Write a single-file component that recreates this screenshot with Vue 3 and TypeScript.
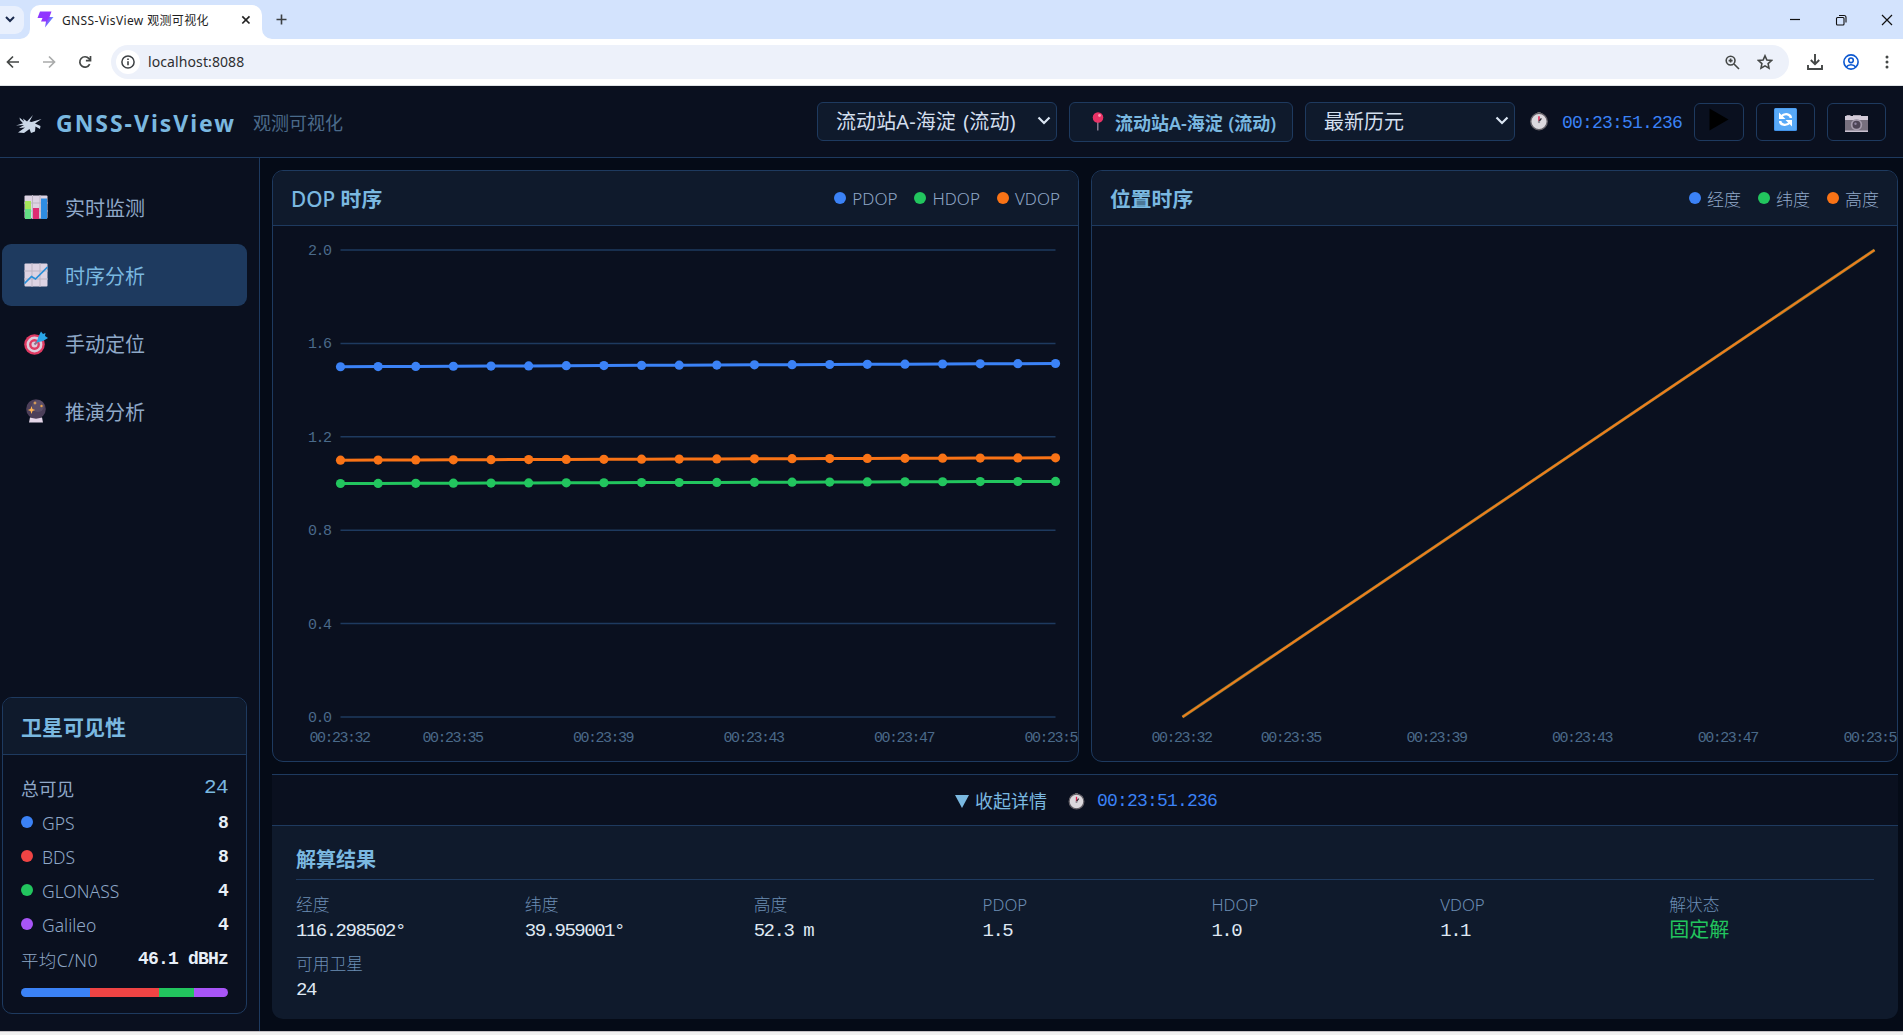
<script setup lang="ts">
interface NavItem { icon: string; label: string; active?: boolean }
interface Sat { name: string; color: string; count: number }
interface Series { name: string; color: string; from: number; to: number }

const nav: NavItem[] = [
  { icon: 'bars', label: '实时监测' },
  { icon: 'trend', label: '时序分析', active: true },
  { icon: 'target', label: '手动定位' },
  { icon: 'orb', label: '推演分析' },
]

const sats: Sat[] = [
  { name: 'GPS', color: '#3b82f6', count: 8 },
  { name: 'BDS', color: '#ef4444', count: 8 },
  { name: 'GLONASS', color: '#22c55e', count: 4 },
  { name: 'Galileo', color: '#a855f7', count: 4 },
]

const dop: Series[] = [
  { name: 'PDOP', color: '#3b82f6', from: 1.5, to: 1.514 },
  { name: 'HDOP', color: '#22c55e', from: 1.0, to: 1.009 },
  { name: 'VDOP', color: '#f97316', from: 1.1, to: 1.11 },
]

const position = [
  { name: '经度', color: '#3b82f6' },
  { name: '纬度', color: '#22c55e' },
  { name: '高度', color: '#f97316' },
]

const results = [
  { label: '经度', value: '116.298502°' },
  { label: '纬度', value: '39.959001°' },
  { label: '高度', value: '52.3 m' },
  { label: 'PDOP', value: '1.5' },
  { label: 'HDOP', value: '1.0' },
  { label: 'VDOP', value: '1.1' },
  { label: '解状态', value: '固定解', ok: true },
  { label: '可用卫星', value: '24' },
]

const N = 20
const TOP = 24
const BOTTOM = 491
const ticks = [2.0, 1.6, 1.2, 0.8, 0.4, 0.0]
const times = [
  { i: 0, t: '00:23:32' },
  { i: 3, t: '00:23:35' },
  { i: 7, t: '00:23:39' },
  { i: 11, t: '00:23:43' },
  { i: 15, t: '00:23:47' },
  { i: 19, t: '00:23:51' },
]
const dopX = (i: number) => 67.5 + (i * 715) / (N - 1)
const posX = (i: number) => 90.5 + (i * 692) / (N - 1)
const yOf = (v: number) => BOTTOM - (v / 2) * (BOTTOM - TOP)
const valueAt = (s: Series, i: number) => s.from + ((s.to - s.from) * i) / (N - 1)
const indexes = Array.from({ length: N }, (_, i) => i)
const line = (s: Series) => indexes.map((i) => `${dopX(i)},${yOf(valueAt(s, i))}`).join(' ')
</script>

<template>
  <div class="window">
    <!-- browser chrome -->
    <div class="tabstrip">
      <div class="tab-search">
        <svg width="10" height="7" viewBox="0 0 10 7"><path d="M1 1l4 4 4-4" fill="none" stroke="#1b2b4d" stroke-width="2" /></svg>
      </div>
      <div class="tab">
        <svg class="favicon" width="17" height="17" viewBox="0 0 17 17">
          <defs><linearGradient id="bolt" x1="0" y1="0" x2="1" y2=".6"><stop offset="0" stop-color="#8b3bff" /><stop offset=".65" stop-color="#9333ff" /><stop offset="1" stop-color="#47bfff" /></linearGradient></defs>
          <path d="M3 0.5h11.5L12.5 6H16.5L8 16.5 9 10.5H4L5.5 7H0.5z" fill="url(#bolt)" />
        </svg>
        <span class="tab-title">GNSS-VisView 观测可视化</span>
        <svg class="tab-close" width="10" height="10" viewBox="0 0 10 10"><path d="M1.3 1.3l7.2 7.2M8.5 1.3L1.3 8.5" stroke="#222" stroke-width="1.7" /></svg>
        <svg class="foot foot-l" width="10" height="10" viewBox="0 0 10 10"><path d="M10 0v10H0A10 10 0 0 0 10 0z" fill="#fff" /></svg>
        <svg class="foot foot-r" width="10" height="10" viewBox="0 0 10 10"><path d="M0 0v10h10A10 10 0 0 1 0 0z" fill="#fff" /></svg>
      </div>
      <svg class="new-tab" width="11" height="11" viewBox="0 0 11 11"><path d="M5.5 0.5v10M0.5 5.5h10" stroke="#3c4043" stroke-width="1.6" /></svg>
      <div class="win-buttons">
        <svg width="12" height="12" viewBox="0 0 12 12"><path d="M1 5.5h10" stroke="#111" stroke-width="1.2" /></svg>
        <svg width="12" height="12" viewBox="0 0 12 12"><rect x="1.5" y="3.5" width="7.5" height="7.5" rx="1" fill="none" stroke="#111" stroke-width="1.1" /><path d="M4 1.5h5a2 2 0 0 1 2 2v5" fill="none" stroke="#111" stroke-width="1.1" /></svg>
        <svg width="12" height="12" viewBox="0 0 12 12"><path d="M1 1l10 10M11 1L1 11" stroke="#111" stroke-width="1.2" /></svg>
      </div>
    </div>
    <div class="toolbar">
      <div class="nav-buttons">
        <svg width="14" height="14" viewBox="0 0 14 14"><path d="M13 7H2M7 1.5L1.5 7 7 12.5" fill="none" stroke="#444746" stroke-width="1.7" /></svg>
        <svg width="14" height="14" viewBox="0 0 14 14"><path d="M1 7h11M7 1.5L12.5 7 7 12.5" fill="none" stroke="#a9abab" stroke-width="1.7" /></svg>
        <svg width="14" height="14" viewBox="0 0 14 14"><path d="M11.7 9.2A5.2 5.2 0 1 1 11 3.6L12.4 5M12.5 1v4.6H7.9" fill="none" stroke="#444746" stroke-width="1.7" /></svg>
      </div>
      <div class="omnibox">
        <div class="site-info">
          <svg width="14" height="14" viewBox="0 0 14 14"><circle cx="7" cy="7" r="6.1" fill="none" stroke="#3c4043" stroke-width="1.5" /><path d="M7 6.2v4M7 3.4v1.6" stroke="#3c4043" stroke-width="1.6" /></svg>
        </div>
        <span class="url">localhost:8088</span>
        <svg class="mag" width="15" height="15" viewBox="0 0 15 15"><circle cx="5.6" cy="5.6" r="4.4" fill="none" stroke="#444746" stroke-width="1.6" /><path d="M9 9l5 5M3.6 5.6h4M5.6 3.6v4" stroke="#444746" stroke-width="1.6" /></svg>
        <svg class="star" width="16" height="16" viewBox="0 0 16 16"><path d="M8 1.8l1.9 4.2 4.6.5-3.4 3.1.9 4.5L8 11.8 4 14.1l.9-4.5L1.5 6.5l4.6-.5z" fill="none" stroke="#444746" stroke-width="1.6" /></svg>
      </div>
      <svg class="dl" width="16" height="16" viewBox="0 0 16 16"><path d="M8 0v9.5M3.8 6L8 10.2 12.2 6M1 11v4h14v-4" fill="none" stroke="#444746" stroke-width="1.9" /></svg>
      <svg class="user" width="16" height="16" viewBox="0 0 16 16"><circle cx="8" cy="8" r="7.1" fill="none" stroke="#0b57d0" stroke-width="1.6" /><circle cx="8" cy="6.3" r="2.3" fill="none" stroke="#0b57d0" stroke-width="1.6" /><path d="M3.3 13c1.200-1.700 2.800-2.300 4.700-2.300s3.500.6 4.700 2.300" fill="none" stroke="#0b57d0" stroke-width="1.6" /></svg>
      <svg class="menu" width="4" height="14" viewBox="0 0 4 14"><circle cx="2" cy="2" r="1.5" fill="#444746" /><circle cx="2" cy="7" r="1.5" fill="#444746" /><circle cx="2" cy="12" r="1.5" fill="#444746" /></svg>
    </div>

    <!-- shared icon symbols -->
    <svg class="defs" width="0" height="0">
      <symbol id="i-clock" viewBox="0 0 17 18">
        <rect x="7" y="0" width="3" height="3" fill="#777" />
        <circle cx="8.5" cy="9" r="7.8" fill="#dcd9de" stroke="#656168" stroke-width="1.3" />
        <path d="M8.5 9V4" stroke="#e0214f" stroke-width="1.4" /><path d="M8.8 8.500l2-2.500" stroke="#2c2c33" stroke-width="1.3" />
        <circle cx="8.5" cy="9.5" r="1.100" fill="#8d8a92" />
      </symbol>
      <symbol id="i-bars" viewBox="0 0 24 24">
        <rect x=".5" y=".5" width="23" height="23" rx="1" fill="#ddd3e3" /><path d="M0 8h24M0 16h24M8.500 0v24M16 0v24" stroke="#bdb5c4" stroke-width="1" />
        <rect x="1" y="6" width="6" height="10" fill="#a5e65a" /><rect x="1" y="14" width="6" height="10" fill="#63df84" /><rect x="9" y="13" width="6" height="11" fill="#de2c72" /><rect x="17" y="3.5" width="6" height="20.500" fill="#2f8de2" />
      </symbol>
      <symbol id="i-trend" viewBox="0 0 24 24">
        <rect x=".5" y=".5" width="23" height="23" rx="1" fill="#ddd3e3" /><path d="M0 8h24M0 16h24M8 0v24M16 0v24" stroke="#bdb5c4" stroke-width="1" />
        <path d="M0.500 20.500L7.500 13.500 11.500 16 23.500 4" fill="none" stroke="#2a8fd8" stroke-width="1.7" />
      </symbol>
      <symbol id="i-target" viewBox="0 0 24 24">
        <circle cx="10.500" cy="13.500" r="10.300" fill="#e03a63" /><circle cx="10.500" cy="13.500" r="7.900" fill="#ddcbdc" /><circle cx="10.500" cy="13.500" r="5.400" fill="#e03a63" /><circle cx="10.500" cy="13.500" r="3" fill="#ddcbdc" />
        <path d="M10.500 13.500L16 8" stroke="#8b6f8c" stroke-width="2" /><path d="M12.500 11.500l2-6L17 0.500l2 2.500 2.500-1-.5 3 3 2-5 3z" fill="#29a6e8" />
      </symbol>
      <symbol id="i-orb" viewBox="0 0 24 24">
        <path d="M5 23.500l1-5h12l1 5z" fill="#e4d6e8" /><circle cx="12" cy="10" r="9.800" fill="#4c3f59" /><circle cx="14" cy="7" r="6" fill="#62566f" opacity=".7" />
        <path d="M7.500 7l1 3 2.700 1-2.700 1-1 3-1-3-2.700-1 2.700-1z" fill="#ffb454" /><path d="M11 2l.6 1.400L13 4l-1.400.6L11 6l-.6-1.400L9 4l1.400-.6z" fill="#ffb454" /><circle cx="17.500" cy="7" r="1.200" fill="#e8a34c" />
      </symbol>
    </svg>

    <div class="app">
      <header class="topbar">
        <svg class="logo" width="26" height="20" viewBox="0 0 26 20">
          <path d="M0 11.5L7 9.200 4 6 3.500 3.500 8 7.500 7 4.500l4 3L17 1l-3.500 6.500 2 .5L25.500 5 19 9.500l5.500 2.500-.5 3-4.500-2.500-.5 5-4 1.500-1.500-4L8 19l-6-.5 7-5-6 .5 5-3z" fill="#cbd8e8" />
        </svg>
        <h1 class="brand">GNSS-VisView</h1>
        <span class="subtitle">观测可视化</span>
        <div class="controls">
          <div class="select station">流动站A-海淀 (流动)
            <svg width="14" height="10" viewBox="0 0 14 10"><path d="M1.5 1.500L7 7l5.500-5.500" fill="none" stroke="#dbe6f3" stroke-width="2.200" /></svg>
          </div>
          <div class="badge">
            <svg width="12" height="19" viewBox="0 0 12 19"><path d="M5.800 10v8.500" stroke="#9a8ca2" stroke-width="1.300" /><circle cx="6" cy="5.500" r="5.300" fill="#e93266" /><circle cx="7.500" cy="3.500" r="1.400" fill="#ff9ab4" /></svg>
            <span>流动站A-海淀 (流动)</span>
          </div>
          <div class="select epoch">最新历元
            <svg width="14" height="10" viewBox="0 0 14 10"><path d="M1.5 1.500L7 7l5.500-5.500" fill="none" stroke="#dbe6f3" stroke-width="2.200" /></svg>
          </div>
          <svg class="clock" width="18" height="19"><use href="#i-clock" /></svg>
          <span class="time">00:23:51.236</span>
          <button class="btn play"><svg width="20" height="23" viewBox="0 0 20 23"><path d="M0.500 0.500L19.500 11.500 0.500 22.500z" fill="#000" /></svg></button>
          <button class="btn">
            <svg class="up" width="23" height="23" viewBox="0 0 23 23">
              <rect width="23" height="23" rx="1.5" fill="#4293ea" /><rect x=".8" y=".5" width="21.400" height="21.500" rx="1" fill="#58a9f7" />
              <path d="M7 8.500Q10 5.500 13.500 6.300T16.800 10M16 14.500Q13 17.500 9.500 16.700T6.200 13" fill="none" stroke="#fff" stroke-width="2.400" />
              <path d="M5 4.500v6.500h6.500zM18 18.500V12h-6.500z" fill="#fff" />
            </svg>
          </button>
          <button class="btn">
            <svg class="down" width="23" height="17" viewBox="0 0 23 17"><rect y="1" width="23" height="16" fill="#77707e" /><path d="M1.500 0h4v2h-4zM8 0h8v2H8z" fill="#aaa3b0" /><rect y="1" width="23" height="4" fill="#d3cbd8" /><rect y="15.500" width="23" height="1.500" fill="#c9c0cf" /><circle cx="11.500" cy="9.800" r="5.700" fill="#a69dae" /><circle cx="11.500" cy="9.800" r="4" fill="#4d4556" /><circle cx="10.500" cy="8.800" r="1.200" fill="#8d84a0" /></svg>
          </button>
        </div>
      </header>

      <div class="body">
        <aside class="sidebar">
          <nav class="nav">
            <a v-for="n in nav" :key="n.label" class="nav-item" :class="{ active: n.active }">
              <svg width="24" height="24"><use :href="`#i-${n.icon}`" /></svg>
              <span>{{ n.label }}</span>
            </a>
          </nav>
          <section class="sat-card">
            <h2>卫星可见性</h2>
            <div class="sat-body">
              <div class="sat-row total"><span>总可见</span><b>24</b></div>
              <div v-for="s in sats" :key="s.name" class="sat-row">
                <i :style="{ background: s.color }"></i><span>{{ s.name }}</span><b>{{ s.count }}</b>
              </div>
              <div class="sat-row avg"><span>平均C/N0</span><b>46.1 dBHz</b></div>
              <div class="sat-bar"><div v-for="s in sats" :key="s.name" :style="{ flexGrow: s.count, background: s.color }"></div></div>
            </div>
          </section>
        </aside>

        <main class="main">
          <div class="charts">
            <section class="panel">
              <div class="panel-head">
                <h2>DOP <b>时序</b></h2>
                <div class="legend"><span v-for="s in dop" :key="s.name"><i :style="{ background: s.color }"></i>{{ s.name }}</span></div>
              </div>
              <svg class="plot" width="806" height="535" viewBox="0 0 806 535">
                <g v-for="t in ticks" :key="t">
                  <line x1="67.500" x2="782.500" :y1="yOf(t)" :y2="yOf(t)" stroke="#1e3a5f" stroke-width="1.500" />
                  <text x="57.500" :y="yOf(t) + 5" text-anchor="end">{{ t.toFixed(1) }}</text>
                </g>
                <text v-for="m in times" :key="m.t" :x="dopX(m.i) - 1" y="516" text-anchor="middle">{{ m.t }}</text>
                <g v-for="s in dop" :key="s.name">
                  <polyline :points="line(s)" fill="none" :stroke="s.color" stroke-width="3" />
                  <circle v-for="i in indexes" :key="i" :cx="dopX(i)" :cy="yOf(valueAt(s, i))" r="4.600" :fill="s.color" />
                </g>
              </svg>
            </section>
            <section class="panel">
              <div class="panel-head">
                <h2><b>位置时序</b></h2>
                <div class="legend"><span v-for="s in position" :key="s.name"><i :style="{ background: s.color }"></i>{{ s.name }}</span></div>
              </div>
              <svg class="plot" width="806" height="535" viewBox="0 0 806 535">
                <text v-for="m in times" :key="m.t" :x="posX(m.i) - 1" y="516" text-anchor="middle">{{ m.t }}</text>
                <line x1="90.500" :y1="BOTTOM" x2="782.500" :y2="TOP" stroke="#7d7a33" stroke-width="3" />
                <line x1="90.500" :y1="BOTTOM" x2="782.500" :y2="TOP" stroke="#f07c1c" stroke-width="2" />
              </svg>
            </section>
          </div>

          <div class="toggle">
            <svg width="14" height="13" viewBox="0 0 14 13"><path d="M0 0h14L7 13z" fill="#7ab8e0" /></svg>
            <span>收起详情</span>
            <svg class="clock" width="17" height="17"><use href="#i-clock" /></svg>
            <span class="time">00:23:51.236</span>
          </div>
          <section class="details">
            <h2>解算结果</h2>
            <dl class="grid">
              <div v-for="r in results" :key="r.label">
                <dt>{{ r.label }}</dt>
                <dd :class="{ ok: r.ok }">{{ r.value }}</dd>
              </div>
            </dl>
          </section>
        </main>
      </div>
    </div>
    <div class="edge"></div>
  </div>
</template>

<style>
body { margin: 0; overflow: hidden; }
</style>

<style scoped>
* { box-sizing: border-box; }
.window { width: 1903px; height: 1035px; overflow: hidden; display: flex; flex-direction: column; background: #fff; font-family: "Noto Sans", "Noto Sans CJK SC", sans-serif; white-space: nowrap; }
svg { flex: none; display: block; }
.defs { position: absolute; }
h1, h2, dl, dd { margin: 0; }

.tabstrip { height: 39px; flex: none; background: #d3e3fd; display: flex; align-items: center; }
.tab-search { width: 24px; height: 28px; background: #e9f0fd; border-radius: 0 9px 9px 0; display: flex; align-items: center; padding-left: 5px; }
.tab { position: relative; align-self: flex-end; width: 232px; height: 34px; margin-left: 6px; padding: 0 11px 5px 7px; background: #fff; border-radius: 10px 10px 0 0; display: flex; align-items: center; }
.tab-title { margin-left: 8px; font-size: 12px; color: #1f1f1f; letter-spacing: 0.37px; }
.tab-close { margin-left: auto; }
.foot { position: absolute; bottom: 0; }
.foot-l { left: -10px; }
.foot-r { right: -10px; }
.new-tab { margin-left: 14px; }
.win-buttons { margin-left: auto; padding-right: 10px; display: flex; gap: 34px; }

.toolbar { height: 47px; flex: none; background: #fff; border-bottom: 1px solid #dfe3e6; display: flex; align-items: center; padding-left: 6px; }
.nav-buttons { display: flex; gap: 22px; width: 105px; }
.omnibox { width: 1678px; height: 34px; border-radius: 17px; background: #edf1fa; display: flex; align-items: center; padding: 0 16px 0 5px; }
.site-info { width: 24px; height: 24px; border-radius: 50%; background: #fff; display: flex; align-items: center; justify-content: center; }
.url { margin-left: 8px; font-size: 14px; color: #2d2f31; letter-spacing: 0.1px; padding-bottom: 1px; }
.mag { margin-left: auto; }
.star { margin-left: 17px; }
.dl { margin-left: 18px; }
.user { margin-left: 20px; }
.menu { margin-left: 26px; }

.app { height: 945px; flex: none; background: #050b17; display: flex; flex-direction: column; color: #c8d6e5; }
.edge { height: 4px; background: #f0f0f0; border-top: 1px solid #c4c0c4; }

.topbar { height: 72px; flex: none; display: flex; align-items: center; padding: 0 17px 0 16px; background: #0a101f; border-bottom: 1px solid #1e3a5f; }
.logo { margin-top: 4px; }
.brand { margin-left: 14px; font-size: 23px; line-height: 32px; font-weight: 700; letter-spacing: 1.98px; color: #7ab8e0; width: 197px; padding-top: 3px; }
.subtitle { font-size: 18px; color: #4a6a8a; line-height: 26px; padding-top: 2px; }
.controls { margin-left: auto; display: flex; align-items: center; }
.select { height: 39px; margin-top: -1px; border: 1px solid #1e3a5f; border-radius: 6px; background: #0f1a2c; color: #d3dfee; font-size: 20px; line-height: 37px; display: flex; align-items: center; justify-content: space-between; padding: 0 5px 0 18px; }
.station { width: 240px; letter-spacing: 0.1px; word-spacing: 2px; }
.epoch { width: 210px; margin-left: 12px; }
.badge { width: 224px; height: 40px; margin-left: 12px; border: 1px solid #1e3a5f; border-radius: 6px; background: #0f1a2c; color: #7ab8e0; font-size: 18px; font-weight: 600; display: flex; align-items: center; padding-left: 22px; word-spacing: 1px; }
.badge span { margin-left: 11px; padding-top: 1px; }
.controls .clock { margin-left: 15px; }
.time { font-family: "Liberation Mono", monospace; font-size: 18px; letter-spacing: -0.8px; color: #3b82f6; line-height: 24px; }
.controls .time { margin-left: 14px; width: 118px; margin-right: 14px; padding-top: 2px; }
.btn { width: 59px; height: 38px; margin-left: 12px; padding: 0; border: 1px solid #1e3a5f; border-radius: 6px; background: #0a101f; display: flex; align-items: center; justify-content: center; }
.btn.play { width: 50px; margin-left: 0; }
.btn svg.up, .btn.play svg { margin-bottom: 4px; }
.btn svg.down { margin-top: 4px; }

.body { flex: 1; min-height: 0; display: flex; }
.sidebar { width: 260px; flex: none; border-right: 1px solid #1e3a5f; background: #0a101f; display: flex; flex-direction: column; justify-content: space-between; padding: 18px 12px 17px 2px; }
.nav { display: flex; flex-direction: column; gap: 6px; }
.nav-item { height: 62px; border-radius: 9px; display: flex; align-items: center; padding-left: 22px; font-size: 20px; color: #8fa8c8; }
.nav-item span { margin-left: 17px; line-height: 28px; padding-top: 3px; }
.nav-item.active { background: #1e3a5f; color: #7ab8e0; }

.sat-card { height: 317px; border: 1px solid #1e3a5f; border-radius: 10px; overflow: hidden; }
.sat-card h2 { height: 57px; background: #0f1a2c; border-bottom: 1px solid #1e3a5f; padding-left: 18px; padding-top: 3px; font-size: 21px; line-height: 52px; font-weight: 700; color: #7ab8e0; }
.sat-body { padding: 17px 18px 0; }
.sat-row { height: 34px; display: flex; align-items: center; font-size: 17.500px; color: #8fa8c8; font-weight: 300; }
.sat-row i { width: 12px; height: 12px; border-radius: 50%; margin-right: 9px; margin-bottom: 3px; }
.sat-row b { margin-left: auto; font-family: "Liberation Mono", monospace; font-size: 18px; letter-spacing: -0.8px; color: #e8eff8; font-weight: 700; padding-bottom: 1px; }
.sat-row.total { font-weight: 400; padding-bottom: 3px; font-size: 17.800px; }
.sat-row.avg { letter-spacing: 0.35px; }
.sat-row.total b { font-size: 21px; letter-spacing: -0.6px; font-weight: 400; color: #7ab8e0; padding-bottom: 0; }
.sat-bar { display: flex; height: 9px; border-radius: 5px; overflow: hidden; margin-top: 12px; }

.main { flex: 1; min-width: 0; padding: 12px 5px 11px 12px; display: flex; flex-direction: column; }
.charts { display: flex; gap: 12px; height: 592px; flex: none; }
.panel { flex: 1; min-width: 0; border: 1px solid #1e3a5f; border-radius: 11px; background: #0a101f; overflow: hidden; }
.panel-head { height: 55px; background: #0f1a2c; border-bottom: 1px solid #1e3a5f; display: flex; align-items: center; justify-content: space-between; padding: 0 18px 0 18px; }
.panel-head h2 { font-size: 20.800px; line-height: 30px; font-weight: 500; color: #7ab8e0; padding-top: 2px; }
.panel-head b { font-weight: 700; }
.legend { display: flex; gap: 17px; font-size: 17px; color: #8fa8c8; font-weight: 300; }
.legend span { display: flex; align-items: center; }
.legend i { width: 12px; height: 12px; border-radius: 50%; margin-right: 6px; }
.plot text { font-family: "Liberation Mono", monospace; font-size: 15px; letter-spacing: -1.500px; fill: #4a6a8a; }

.toggle { height: 51px; flex: none; margin-top: 12px; border-top: 1px solid #1e3a5f; background: #0a101f; display: flex; align-items: center; justify-content: center; font-size: 18px; color: #7ab8e0; padding: 2px 0 0 2px; }
.toggle span { margin-left: 6px; line-height: 26px; }
.toggle .clock { margin-left: 21px; }
.toggle .time { margin-left: 12px; }
.details { height: 194px; flex: none; border-top: 1px solid #1e3a5f; border-radius: 0 0 11px 11px; background: #0f1a2c; padding: 18px 24px 0; }
.details h2 { height: 36px; border-bottom: 1px solid #1e3a5f; font-size: 20px; line-height: 32px; font-weight: 700; color: #7ab8e0; }
.grid { display: grid; grid-template-columns: repeat(7, 1fr); column-gap: 24px; row-gap: 9px; padding-top: 13px; }
.grid > div { height: 50px; }
dt { font-size: 16.800px; line-height: 24px; color: #6c8db4; font-weight: 300; }
dd { font-family: "Liberation Mono", "Noto Sans CJK SC", monospace; font-size: 19px; letter-spacing: -1.500px; line-height: 28px; color: #dfe8f3; }
dd.ok { letter-spacing: 0; font-size: 20px; color: #22c55e; font-weight: 400; padding-top: 1px; }
</style>
